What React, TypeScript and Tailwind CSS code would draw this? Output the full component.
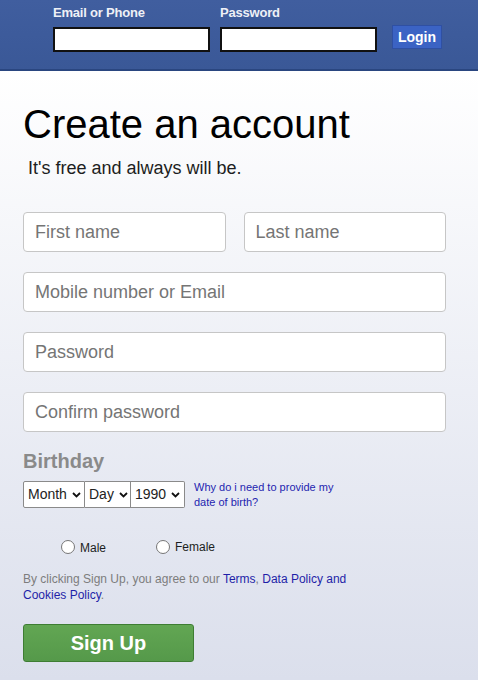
import React from "react";

const Chevron = () => (
  <svg width="9" height="6" viewBox="0 0 9 6" className="ml-[5px]">
    <path d="M1 1 L4.5 4.5 L8 1" fill="none" stroke="#111" strokeWidth="1.8" />
  </svg>
);

const Field = ({ ph, w }: { ph: string; w: string }) => (
  <div
    className={`${w} h-[40px] bg-white border border-[#c6c6c6] rounded-[4px] pl-[11px] flex items-center text-[18px] text-[#757575]`}
  >
    {ph}
  </div>
);

export default function App() {
  return (
    <div
      className="w-[478px] h-[680px] overflow-hidden"
      style={{ fontFamily: '"Liberation Sans", Arial, sans-serif' }}
    >
      <div className="h-[71px] bg-gradient-to-b from-[#405e9f] to-[#3a5897] border-b-2 border-[#2a4680] pl-[53px] flex items-start">
        <div className="flex flex-col mt-[5px]">
          <span className="text-[13px] font-bold text-[#eef0f6] leading-[16px] tracking-[-0.2px]">Email or Phone</span>
          <div className="mt-[6px] w-[157px] h-[25px] bg-white border-2 border-[#111]"></div>
        </div>
        <div className="flex flex-col mt-[5px] ml-[10px]">
          <span className="text-[13px] font-bold text-[#eef0f6] leading-[16px] tracking-[-0.2px]">Password</span>
          <div className="mt-[6px] w-[157px] h-[25px] bg-white border-2 border-[#111]"></div>
        </div>
        <div className="ml-[15px] mt-[25px] w-[50px] h-[24px] bg-[#3b63c4] border border-[#2f50a3] flex items-center justify-center text-[14px] font-bold text-white">
          Login
        </div>
      </div>
      <div className="h-[609px] bg-gradient-to-b from-white to-[#dbdfec] pl-[23px] pt-[30px]">
        <div className="text-[40px] leading-[46px] text-black">Create an account</div>
        <div className="mt-[11px] pl-[5px] text-[18px] leading-[21px] text-[#1c1e21]">It's free and always will be.</div>
        <div className="mt-[33px] flex flex-col gap-[20px] w-[423px]">
          <div className="flex gap-[18px]">
            <Field ph="First name" w="w-[203px]" />
            <Field ph="Last name" w="w-[203px]" />
          </div>
          <Field ph="Mobile number or Email" w="w-[423px]" />
          <Field ph="Password" w="w-[423px]" />
          <Field ph="Confirm password" w="w-[423px]" />
        </div>
        <div className="mt-[18px] text-[20px] leading-[23px] font-bold text-[#8a8a8a]">Birthday</div>
        <div className="mt-[8px] flex items-start">
          <div className="flex text-[14px] text-[#222]">
            <div className="w-[62px] h-[27px] bg-white border border-[#8a8a8a] rounded-l-[2px] flex items-center pl-[4px]">
              Month<Chevron />
            </div>
            <div className="w-[46px] h-[27px] bg-white border border-l-0 border-[#8a8a8a] flex items-center pl-[4px]">
              Day<Chevron />
            </div>
            <div className="w-[54px] h-[27px] bg-white border border-l-0 border-[#8a8a8a] rounded-r-[2px] flex items-center pl-[4px]">
              1990<Chevron />
            </div>
          </div>
          <div className="ml-[9px] text-[11px] leading-[15px] text-[#1f1fb0] w-[150px] -mt-[1px]">
            Why do i need to provide my date of birth?
          </div>
        </div>
        <div className="mt-[26px] flex items-center text-[12px] text-[#1c1e21]">
          <span className="ml-[38px] w-[14px] h-[14px] rounded-full border border-[#767676] bg-white"></span>
          <span className="ml-[5px] mt-[3px]">Male</span>
          <span className="ml-[50px] w-[14px] h-[14px] rounded-full border border-[#767676] bg-white"></span>
          <span className="ml-[5px] mt-[1px]">Female</span>
        </div>
        <div className="mt-[14px] text-[12px] leading-[16px] text-[#7d7d7d] w-[340px]">
          By clicking Sign Up, you agree to our <span className="text-[#1f1fa8]">Terms</span>,{" "}
          <span className="text-[#1f1fa8]">Data Policy and Cookies Policy</span>.
        </div>
        <div className="mt-[21px] w-[171px] h-[38px] rounded-[3px] bg-gradient-to-b from-[#62a653] to-[#55994a] border border-[#3e7d33] flex items-center justify-center text-[20px] font-bold text-white">
          Sign Up
        </div>
      </div>
    </div>
  );
}
